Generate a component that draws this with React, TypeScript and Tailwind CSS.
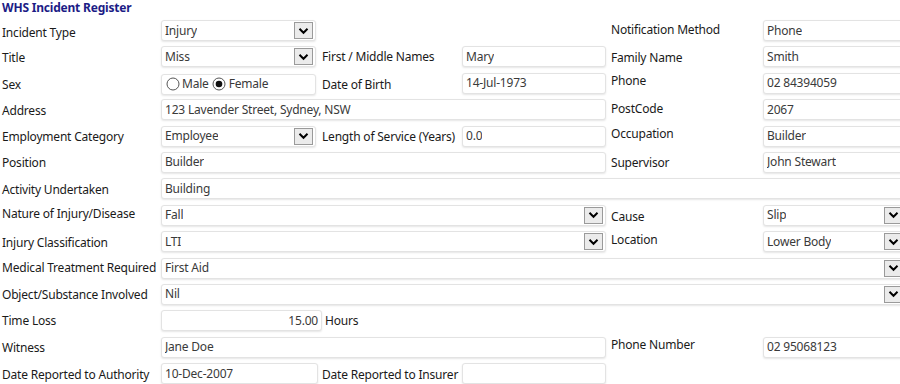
import React from "react";

const Label = ({ children, className = "" }: { children?: React.ReactNode; className?: string }) => (
  <div className={`h-[21px] flex items-center shrink-0 whitespace-nowrap text-[#1a1a1a] ${className}`}>{children}</div>
);

const Chevron = () => (
  <div className="ml-auto mr-[2px] w-[19px] h-[17px] shrink-0 border border-[#9a9a9a] bg-[#ebebeb] flex items-center justify-center">
    <svg width="11" height="8" viewBox="0 0 11 8">
      <path d="M1.5 1.8 L5.5 5.8 L9.5 1.8" fill="none" stroke="#000" strokeWidth="2" />
    </svg>
  </div>
);

const Field = ({
  children,
  className = "",
  select = false,
}: {
  children?: React.ReactNode;
  className?: string;
  select?: boolean;
}) => (
  <div
    className={`h-[21px] shrink-0 bg-white border border-[#e3e3e3] rounded-[3px] shadow-[0_1px_2px_rgba(0,0,0,0.10)] flex items-center pl-[3px] text-[#3a3a3a] whitespace-nowrap overflow-hidden ${className}`}
  >
    <span className="truncate">{children}</span>
    {select && <Chevron />}
  </div>
);

const Row = ({ children }: { children?: React.ReactNode }) => (
  <div className="flex items-start h-[26.4px]">{children}</div>
);

const Radio = ({ checked }: { checked?: boolean }) => (
  <svg width="14" height="14" viewBox="0 0 14 14" className="shrink-0">
    <circle cx="7" cy="7" r="6" fill="#fff" stroke="#555" strokeWidth="1" />
    {checked && <circle cx="7" cy="7" r="3.3" fill="#111" />}
  </svg>
);

export default function App() {
  return (
    <div className="w-[900px] h-[384px] overflow-hidden bg-white font-['Noto_Sans','Open_Sans',sans-serif] text-[12px] leading-[16px] tracking-[-0.2px]">
      <div className="w-[920px]">
        <div className="h-[20px] pl-[2px] font-bold text-[#1c1c86] leading-[15px]">WHS Incident Register</div>

        <Row>
          <Label className="w-[161px] pl-[2px] translate-y-[2px]">Incident Type</Label>
          <Field select className="w-[155px]">Injury</Field>
          <div className="w-[290px] shrink-0" />
          <Label className="w-[157px] pl-[5px] -translate-y-[1px]">Notification Method</Label>
          <Field className="w-[143px]">Phone</Field>
        </Row>

        <Row>
          <Label className="w-[161px] pl-[2px] translate-y-[1px]">Title</Label>
          <Field select className="w-[155px]">Miss</Field>
          <Label className="w-[146px] pl-[6px]">First / Middle Names</Label>
          <Field className="w-[144px]">Mary</Field>
          <Label className="w-[157px] pl-[5px] translate-y-[1px]">Family Name</Label>
          <Field className="w-[143px]">Smith</Field>
        </Row>

        <Row>
          <Label className="w-[161px] pl-[2px] translate-y-[2px]">Sex</Label>
          <div className="w-[155px] h-[21px] shrink-0 bg-white border border-[#e3e3e3] rounded-[3px] shadow-[0_1px_2px_rgba(0,0,0,0.10)] flex items-center pl-[4px] text-[#3a3a3a] translate-y-[1px]">
            <Radio />
            <span className="ml-[2px]">Male</span>
            <span className="ml-[3px]" />
            <Radio checked />
            <span className="ml-[3px]">Female</span>
          </div>
          <Label className="w-[146px] pl-[6px] translate-y-[2px]">Date of Birth</Label>
          <Field className="w-[144px]">14-Jul-1973</Field>
          <Label className="w-[157px] pl-[5px] -translate-y-[2px]">Phone</Label>
          <Field className="w-[143px]">02 84394059</Field>
        </Row>

        <Row>
          <Label className="w-[161px] pl-[2px] translate-y-[1px]">Address</Label>
          <Field className="w-[445px]">123 Lavender Street, Sydney, NSW</Field>
          <Label className="w-[157px] pl-[5px] -translate-y-[1px]">PostCode</Label>
          <Field className="w-[143px]">2067</Field>
        </Row>

        <Row>
          <Label className="w-[161px] pl-[2px] translate-y-[1px]">Employment Category</Label>
          <Field select className="w-[155px]">Employee</Field>
          <Label className="w-[146px] pl-[6px] translate-y-[1px]">Length of Service (Years)</Label>
          <Field className="w-[144px]">0.0</Field>
          <Label className="w-[157px] pl-[5px] -translate-y-[2px]">Occupation</Label>
          <Field className="w-[143px]">Builder</Field>
        </Row>

        <Row>
          <Label className="w-[161px] pl-[2px] translate-y-[1px]">Position</Label>
          <Field className="w-[445px]">Builder</Field>
          <Label className="w-[157px] pl-[5px] translate-y-[1px]">Supervisor</Label>
          <Field className="w-[143px]">John Stewart</Field>
        </Row>

        <Row>
          <Label className="w-[161px] pl-[2px] translate-y-[1px]">Activity Undertaken</Label>
          <Field className="w-[745px]">Building</Field>
        </Row>

        <Row>
          <Label className="w-[161px] pl-[2px] -translate-y-[1px]">Nature of Injury/Disease</Label>
          <Field select className="w-[445px]">Fall</Field>
          <Label className="w-[157px] pl-[5px] translate-y-[2px]">Cause</Label>
          <Field select className="w-[143px]">Slip</Field>
        </Row>

        <Row>
          <Label className="w-[161px] pl-[2px] translate-y-[1px]">Injury Classification</Label>
          <Field select className="w-[445px]">LTI</Field>
          <Label className="w-[157px] pl-[5px] -translate-y-[2px]">Location</Label>
          <Field select className="w-[143px]">Lower Body</Field>
        </Row>

        <Row>
          <Label className="w-[161px] pl-[2px]">Medical Treatment Required</Label>
          <Field select className="w-[745px]">First Aid</Field>
        </Row>

        <Row>
          <Label className="w-[161px] pl-[2px] translate-y-[1px]">Object/Substance Involved</Label>
          <Field select className="w-[745px]">Nil</Field>
        </Row>

        <Row>
          <Label className="w-[161px] pl-[2px]">Time Loss</Label>
          <div className="w-[161px] h-[21px] shrink-0 bg-white border border-[#e3e3e3] rounded-[3px] shadow-[0_1px_2px_rgba(0,0,0,0.10)] flex items-center justify-end pr-[3px] text-[#3a3a3a]">
            15.00
          </div>
          <Label className="pl-[3px]">Hours</Label>
        </Row>

        <Row>
          <Label className="w-[161px] pl-[2px] translate-y-[1px]">Witness</Label>
          <Field className="w-[445px]">Jane Doe</Field>
          <Label className="w-[157px] pl-[5px] -translate-y-[2px]">Phone Number</Label>
          <Field className="w-[143px]">02 95068123</Field>
        </Row>

        <Row>
          <Label className="w-[161px] pl-[2px] translate-y-[1px]">Date Reported to Authority</Label>
          <Field className="w-[157px]">10-Dec-2007</Field>
          <Label className="w-[144px] pl-[4px] translate-y-[1px]">Date Reported to Insurer</Label>
          <Field className="w-[144px]"></Field>
        </Row>
      </div>
    </div>
  );
}
